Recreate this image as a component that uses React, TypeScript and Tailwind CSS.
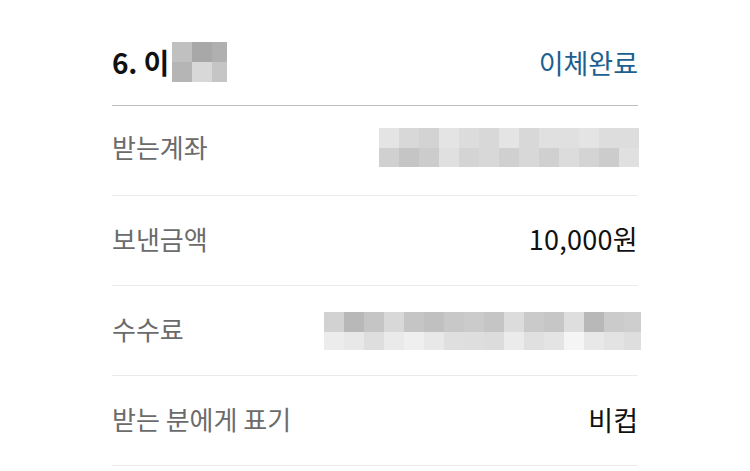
import React from "react";

const headerMosaic = [
  ["bg-[#c0c0c0]", "bg-[#a8a8a8]", "bg-[#b0b0b0]"],
  ["bg-[#b5b5b5]", "bg-[#d8d8d8]", "bg-[#c5c5c5]"],
];

const accountMosaic = [
  ["bg-[#e4e4e4]", "bg-[#d8d8d8]", "bg-[#d3d3d3]", "bg-[#e4e4e4]", "bg-[#dcdcdc]", "bg-[#d8d8d8]", "bg-[#e4e4e4]", "bg-[#d8d8d8]", "bg-[#e0e0e0]", "bg-[#e0e0e0]", "bg-[#e4e4e4]", "bg-[#dddddd]", "bg-[#dddddd]"],
  ["bg-[#d0d0d0]", "bg-[#c5c5c5]", "bg-[#cccccc]", "bg-[#e0e0e0]", "bg-[#d4d4d4]", "bg-[#d8d8d8]", "bg-[#d0d0d0]", "bg-[#d8d8d8]", "bg-[#d0d0d0]", "bg-[#dcdcdc]", "bg-[#d4d4d4]", "bg-[#cccccc]", "bg-[#e0e0e0]"],
];

const feeMosaic = [
  ["bg-[#d2d2d2]", "bg-[#b8b8b8]", "bg-[#c5c5c5]", "bg-[#d8d8d8]", "bg-[#c5c5c5]", "bg-[#c0c0c0]", "bg-[#c8c8c8]", "bg-[#cbcbcb]", "bg-[#c5c5c5]", "bg-[#dcdcdc]", "bg-[#cacaca]", "bg-[#c6c6c6]", "bg-[#dedede]", "bg-[#b8b8b8]", "bg-[#cbcbcb]", "bg-[#cecece]"],
  ["bg-[#ececec]", "bg-[#e8e8e8]", "bg-[#dedede]", "bg-[#eaeaea]", "bg-[#efefef]", "bg-[#e8e8e8]", "bg-[#dfdfdf]", "bg-[#dedede]", "bg-[#dcdcdc]", "bg-[#ebebeb]", "bg-[#e0e0e0]", "bg-[#e4e4e4]", "bg-[#f5f5f5]", "bg-[#e8e8e8]", "bg-[#e3e3e3]", "bg-[#dedede]"],
];

function Mosaic({ rows, cell, lastW, rowH }: { rows: string[][]; cell: number; lastW?: number; rowH: number[] }) {
  return (
    <div className="flex flex-col">
      {rows.map((r, i) => (
        <div key={i} className="flex" style={{ height: rowH[i] }}>
          {r.map((c, j) => (
            <div
              key={j}
              className={c}
              style={{ width: j === r.length - 1 && lastW ? lastW : cell, height: "100%" }}
            />
          ))}
        </div>
      ))}
    </div>
  );
}

export default function App() {
  const font = { fontFamily: '"Noto Sans CJK KR", "Noto Sans", sans-serif' };
  return (
    <div className="w-[750px] h-[471px] bg-white overflow-hidden" style={font}>
      <div className="ml-[112px] w-[526px]">
        <div className="flex items-center justify-between h-[106px] pt-[19px] border-b border-[#bdbdbd]">
          <div className="flex items-center">
            <span className="text-[28px] font-bold text-[#111] leading-none tracking-[-0.2px]">6. 이</span>
            <div className="ml-[3px]">
              <Mosaic rows={headerMosaic} cell={20} lastW={15} rowH={[20, 20]} />
            </div>
          </div>
          <span className="text-[27px] text-[#1d5f8f] leading-none">이체완료</span>
        </div>

        <div className="flex items-center justify-between h-[90px] border-b border-[#ebebeb] pb-[7px]">
          <span className="text-[26px] text-[#6b6b6b] leading-none">받는계좌</span>
          <div className="mr-[-1px]">
            <Mosaic rows={accountMosaic} cell={20} rowH={[20, 19]} />
          </div>
        </div>

        <div className="flex items-center justify-between h-[90px] border-b border-[#ebebeb] pb-[4px]">
          <span className="text-[26px] text-[#6b6b6b] leading-none">보낸금액</span>
          <span className="text-[27px] text-[#111] leading-none tracking-[0.3px]">10,000원</span>
        </div>

        <div className="flex items-center justify-between h-[90px] border-b border-[#ebebeb] pb-[4px]">
          <span className="text-[26px] text-[#6b6b6b] leading-none">수수료</span>
          <div className="mr-[-3px] mt-[4px]">
            <Mosaic rows={feeMosaic} cell={20} lastW={17} rowH={[20, 18]} />
          </div>
        </div>

        <div className="flex items-center justify-between h-[90px] border-b border-[#ebebeb] pb-[3px]">
          <span className="text-[26px] text-[#6b6b6b] leading-none">받는 분에게 표기</span>
          <span className="text-[27px] text-[#111] leading-none">비컵</span>
        </div>
      </div>
    </div>
  );
}
